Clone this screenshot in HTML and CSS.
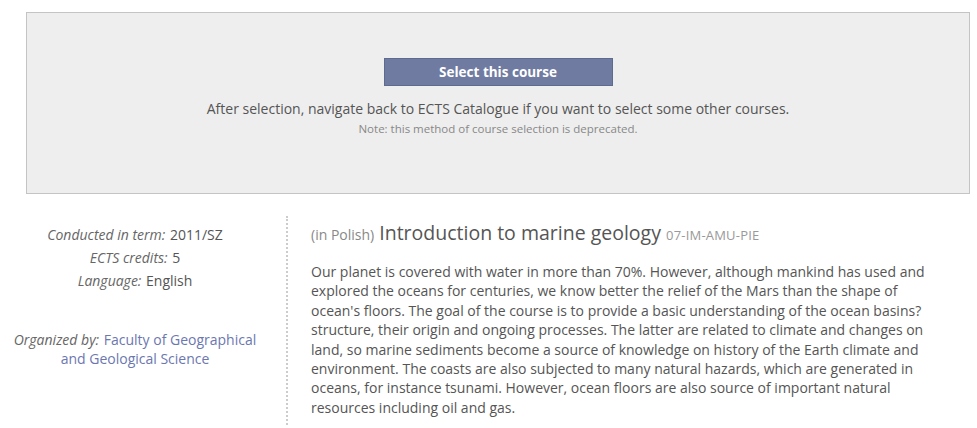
FILE: index.html
```html
<!DOCTYPE html>
<html>
<head>
<meta charset="utf-8">
<link rel="stylesheet" href="styles.css">
</head>
<body>
<div class="select-box">
  <button class="select-btn">Select this course</button>
  <div class="after">After selection, navigate back to ECTS Catalogue if you want to select some other courses.</div>
  <div class="note">Note: this method of course selection is deprecated.</div>
</div>
<div class="course">
  <div class="meta">
    <div class="row"><i>Conducted in term:</i> 2011/SZ</div>
    <div class="row"><i>ECTS credits:</i> 5</div>
    <div class="row"><i>Language:</i> English</div>
    <div class="org"><i>Organized by:</i> <a href="#">Faculty of Geographical and Geological Science</a></div>
  </div>
  <div class="content">
    <h1 class="title"><span class="lang">(in Polish)</span> Introduction to marine geology <span class="code">07-IM-AMU-PIE</span></h1>
    <p class="desc">Our planet is covered with water in more than 70%. However, although mankind has used and explored the oceans for centuries, we know better the relief of the Mars than the shape of ocean's floors. The goal of the course is to provide a basic understanding of the ocean basins? structure, their origin and ongoing processes. The latter are related to climate and changes on land, so marine sediments become a source of knowledge on history of the Earth climate and environment. The coasts are also subjected to many natural hazards, which are generated in oceans, for instance tsunami. However, ocean floors are also source of important natural resources including oil and gas.</p>
  </div>
</div>
</body>
</html>
```
FILE: styles.css
```css
html, body { margin: 0; padding: 0; background: #fff; }
body {
  font-family: "Open Sans", "Noto Sans", sans-serif;
  font-size: 14px;
  color: #555;
  padding: 12px 8px 0 26px;
}
.select-box {
  width: 944px;
  height: 182px;
  box-sizing: border-box;
  background: #eeeeee;
  border: 1px solid #c4c4c4;
  display: flex;
  flex-direction: column;
  align-items: center;
  padding-top: 45px;
}
.select-btn {
  width: 229px;
  height: 28px;
  background: #6f7ba0;
  border: 1px solid #5e6a90;
  color: #fff;
  font-family: inherit;
  font-weight: bold;
  font-size: 13.5px;
  padding: 0;
}
.after {
  margin-top: 13px;
  font-size: 14px;
  line-height: 20px;
  color: #555;
}
.note {
  margin-top: 2px;
  font-size: 11.5px;
  line-height: 16px;
  color: #888;
}
.course {
  display: flex;
  margin-left: -22px;
  margin-top: 22px;
}
.meta {
  width: 262px;
  text-align: center;
  padding-top: 7px;
  flex-shrink: 0;
}
.meta i { color: #666; margin-right: 1px; }
.row { line-height: 23px; }
.org { margin-top: 38px; line-height: 19px; padding: 0 2px; }
.org a { color: #6c77b0; text-decoration: none; }
.content {
  margin-left: 20px;
  border-left: 2px dotted #ccc;
  padding-left: 23px;
  width: 630px;
  padding-top: 4px;
  padding-bottom: 8px;
}
.title {
  margin: 0;
  font-weight: normal;
  font-size: 19.5px;
  color: #555;
  line-height: 26px;
}
.lang { font-size: 14px; color: #888; }
.code { font-size: 13px; color: #999; letter-spacing: 0.2px; }
.desc {
  margin: 14px 0 0;
  line-height: 19.4px;
}
```
